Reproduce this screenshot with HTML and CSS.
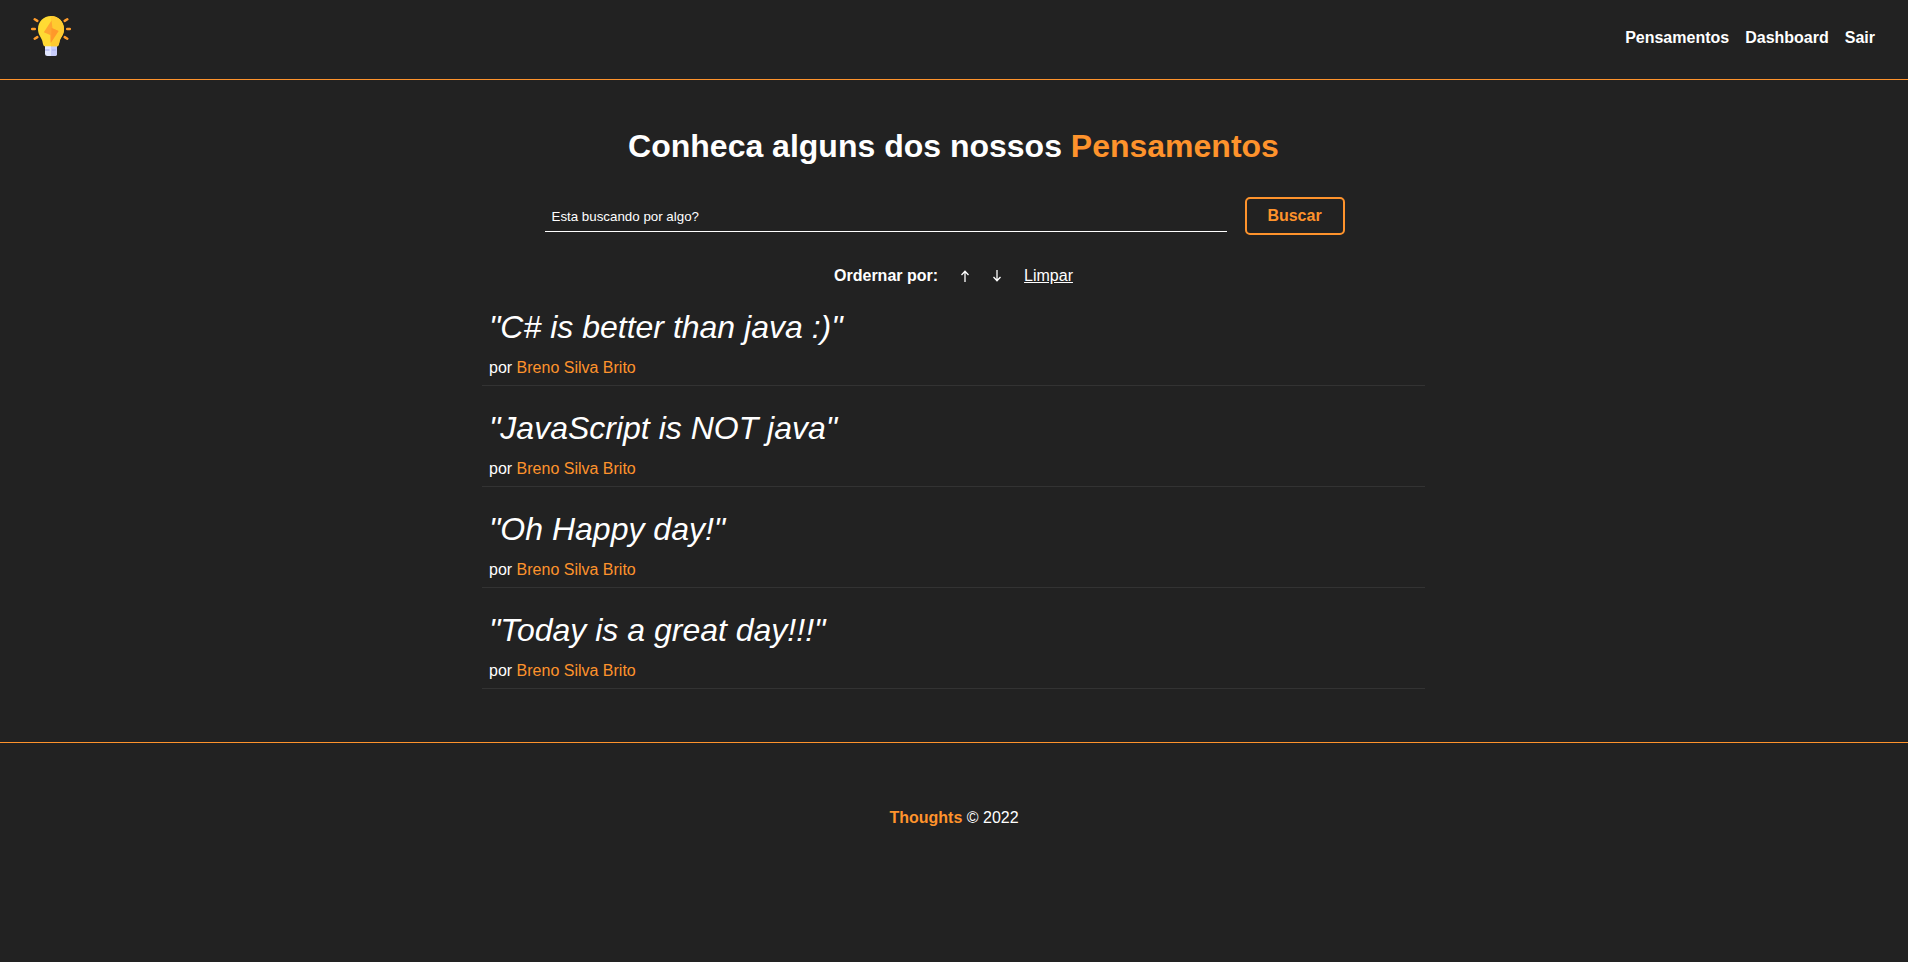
FILE: index.html
```html
<!DOCTYPE html>
<html lang="pt-BR">
<head>
<meta charset="utf-8">
<title>Thoughts</title>
<link rel="stylesheet" href="styles.css">
</head>
<body>
<header class="navbar">
  <a class="logo" href="#" aria-label="Thoughts">
    <svg viewBox="0 0 40 40" width="40" height="40" aria-hidden="true">
      <path d="M14 29h12v8.500q0 2.500-2.500 2.500h-7q-2.500 0-2.500-2.500z" fill="#e1e6ff"/>
      <path d="M20 29h6v8.500q0 2.500-2.500 2.500h-3.500z" fill="#c8cdfb"/>
      <path d="M14 34h4.500M21 34h4" stroke="#b5bbf2" stroke-width="1.600"/>
      <path d="M20 0C12.500 0 7 5.800 7 13c0 5.500 3 8 4.200 11.500.8 2.500.7 5.800 2.800 5.800h12c2.100 0 2-3.300 2.800-5.800C30 21 33 18.500 33 13 33 5.800 27.500 0 20 0z" fill="#ffda33"/>
      <path d="M20 0c7.500 0 13 5.800 13 13 0 5.500-3 8-4.200 11.500-.8 2.500-.7 5.800-2.800 5.800h-6z" fill="#ffcb30"/>
      <path d="M20.500 4.500L12.800 16.300l6.400 2.700.3 8L27.500 15l-6-2.700z" fill="#ffa530"/>
      <path d="M20.500 12l7 3-7.500 11.500z" fill="#ff982a"/>
      <path d="M1.200 13h2.600M36.200 13h2.600M3.700 3.300l2.600 1.600M36.300 3.300l-2.600 1.600M3.700 22.700l2.600-1.600M36.300 22.700l-2.600-1.600" stroke="#ff9c2c" stroke-width="2.500" stroke-linecap="round"/>
    </svg>
  </a>
  <nav class="menu">
    <a href="#">Pensamentos</a>
    <a href="#">Dashboard</a>
    <a href="#">Sair</a>
  </nav>
</header>
<main class="thoughts">
  <h1 class="title">Conheca alguns dos nossos <span>Pensamentos</span></h1>
  <form class="search">
    <input type="text" name="search" placeholder="Esta buscando por algo?" aria-label="Buscar pensamentos">
    <button type="submit">Buscar</button>
  </form>
  <div class="order">
    <strong>Ordernar por:</strong>
    <button type="button" aria-label="Mais antigos">
      <svg viewBox="0 0 10 12" width="10" height="12"><path d="M5 12V1.500M1.500 5L5 1.200 8.500 5"/></svg>
    </button>
    <button type="button" aria-label="Mais recentes">
      <svg viewBox="0 0 10 12" width="10" height="12"><path d="M5 0v10.500M1.500 7L5 10.800 8.500 7"/></svg>
    </button>
    <a href="#">Limpar</a>
  </div>
  <ul class="list">
    <li><p class="quote">"C# is better than java :)"</p><p>por <span>Breno Silva Brito</span></p></li>
    <li><p class="quote">"JavaScript is NOT java"</p><p>por <span>Breno Silva Brito</span></p></li>
    <li><p class="quote">"Oh Happy day!"</p><p>por <span>Breno Silva Brito</span></p></li>
    <li><p class="quote">"Today is a great day!!!"</p><p>por <span>Breno Silva Brito</span></p></li>
  </ul>
</main>
<footer class="footer">
  <p><span>Thoughts</span> © 2022</p>
</footer>
</body>
</html>
```
FILE: styles.css
```css
* {
  box-sizing: border-box;
  margin: 0;
  padding: 0;
}

body {
  background: #222;
  color: #fff;
  font: 16px/18px "Liberation Sans", Arial, sans-serif;
}

.navbar {
  display: flex;
  justify-content: space-between;
  align-items: flex-start;
  padding: 16px 33px 23px 31px;
  border-bottom: 1px solid #fe932c;
}

.logo svg {
  display: block;
}

.menu {
  display: flex;
  gap: 16px;
  padding-top: 13px;
}

.menu a {
  color: #fff;
  font-weight: bold;
  text-decoration: none;
}

.thoughts {
  width: 50%;
  min-width: 320px;
  margin: 0 auto;
  padding: 48px 6px 53px 5px;
}

.title {
  font-size: 32px;
  line-height: 36px;
  text-align: center;
}

.title span,
.list span,
.footer span {
  color: #fe932c;
}

.search {
  display: flex;
  align-items: flex-start;
  gap: 18px;
  max-width: 818px;
  margin: 33px auto 0;
  padding-right: 18px;
}

.search input {
  flex: 1;
  min-width: 0;
  height: 35px;
  padding: 4px 7px 0;
  border: 0;
  border-bottom: 1px solid #fff;
  background: transparent;
  color: #fff;
  font-family: "Liberation Sans", Arial, sans-serif;
}

.search input::placeholder {
  color: #fff;
  opacity: 1;
}

.search button {
  width: 100px;
  height: 38px;
  border: 2px solid #fe932c;
  border-radius: 5px;
  background: transparent;
  color: #fe932c;
  font: bold 16px/18px "Liberation Sans", Arial, sans-serif;
}

.order {
  display: flex;
  justify-content: center;
  align-items: center;
  gap: 22px;
  margin-top: 32px;
}

.order button {
  display: flex;
  border: 0;
  background: transparent;
}

.order path {
  fill: none;
  stroke: #fff;
  stroke-width: 1.3;
}

.order a {
  color: #fff;
}

.list {
  list-style: none;
  margin-top: 24px;
}

.list li {
  padding: 0 7px 8px;
  border-bottom: 1px solid #333;
}

.list li + li {
  margin-top: 24px;
}

.quote {
  margin-bottom: 14px;
  font-size: 32px;
  font-style: italic;
  line-height: 36px;
}

.footer {
  padding: 66px 16px;
  border-top: 1px solid #fe932c;
  text-align: center;
}

.footer span {
  font-weight: bold;
}
```
